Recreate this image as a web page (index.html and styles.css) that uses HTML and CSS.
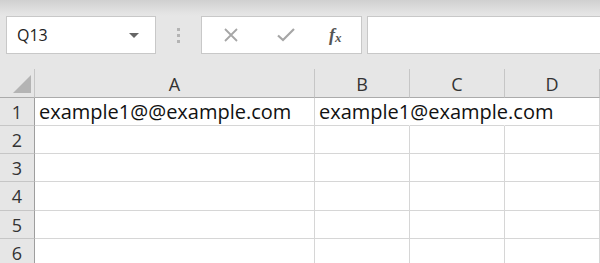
FILE: index.html
```html
<!DOCTYPE html>
<html lang="en">
<head>
  <meta charset="UTF-8">
  <title>Sheet</title>
  <link rel="stylesheet" href="styles.css">
</head>
<body>
  <div class="toolbar">
    <div class="name-box">
      <span class="name-text">Q13</span>
      <span class="name-arrow"></span>
    </div>
    <div class="grip">
      <span></span><span></span><span></span>
    </div>
    <div class="formula-buttons">
      <svg class="btn-icon" width="16" height="16" viewBox="0 0 16 16">
        <path d="M2 2 L14 14 M14 2 L2 14" stroke="#a6a6a6" stroke-width="1.8" fill="none"/>
      </svg>
      <svg class="btn-icon" width="18" height="16" viewBox="0 0 18 16">
        <path d="M1 8.5 L6 13 L17 2" stroke="#a6a6a6" stroke-width="2.2" fill="none"/>
      </svg>
      <span class="fx">f<sub>x</sub></span>
    </div>
    <div class="formula-input"></div>
  </div>

  <div class="sheet">
    <div class="row head-row">
      <div class="corner"><span class="corner-tri"></span></div>
      <div class="col-head col-a">A</div>
      <div class="col-head col-b">B</div>
      <div class="col-head col-c">C</div>
      <div class="col-head col-d">D</div>
    </div>
    <div class="row">
      <div class="row-head">1</div>
      <div class="cell col-a">example1@@example.com</div>
      <div class="cell col-b spill">example1@example.com</div>
      <div class="cell col-c spill"></div>
      <div class="cell col-d"></div>
    </div>
    <div class="row">
      <div class="row-head">2</div>
      <div class="cell col-a"></div>
      <div class="cell col-b"></div>
      <div class="cell col-c"></div>
      <div class="cell col-d"></div>
    </div>
    <div class="row">
      <div class="row-head">3</div>
      <div class="cell col-a"></div>
      <div class="cell col-b"></div>
      <div class="cell col-c"></div>
      <div class="cell col-d"></div>
    </div>
    <div class="row tall">
      <div class="row-head">4</div>
      <div class="cell col-a"></div>
      <div class="cell col-b"></div>
      <div class="cell col-c"></div>
      <div class="cell col-d"></div>
    </div>
    <div class="row">
      <div class="row-head">5</div>
      <div class="cell col-a"></div>
      <div class="cell col-b"></div>
      <div class="cell col-c"></div>
      <div class="cell col-d"></div>
    </div>
    <div class="row">
      <div class="row-head">6</div>
      <div class="cell col-a"></div>
      <div class="cell col-b"></div>
      <div class="cell col-c"></div>
      <div class="cell col-d"></div>
    </div>
  </div>
</body>
</html>
```
FILE: styles.css
```css
/* General */
body {
  margin: 0;
  background: #e6e6e6;
  font-family: 'Open Sans', 'Liberation Sans', sans-serif;
  overflow: hidden;
}

/* Formula bar */
.toolbar {
  height: 69px;
  box-sizing: border-box;
  padding-top: 16px;
  display: flex;
  align-items: flex-start;
  background: linear-gradient(#d0d0d0 0, #e2e2e2 12px, #e6e6e6 16px);
}

.name-box {
  margin-left: 6px;
  width: 150px;
  height: 38px;
  box-sizing: border-box;
  border: 1px solid #c8c8c8;
  background: #fff;
  display: flex;
  align-items: center;
  justify-content: space-between;
  padding: 0 16px 0 10px;
}

.name-text {
  font-size: 16px;
  color: #222;
}

.name-arrow {
  width: 0;
  height: 0;
  border-left: 5px solid transparent;
  border-right: 5px solid transparent;
  border-top: 5px solid #666;
}

.grip {
  width: 45px;
  height: 38px;
  display: flex;
  flex-direction: column;
  align-items: center;
  justify-content: center;
  gap: 3px;
}

.grip span {
  width: 3px;
  height: 3px;
  background: #b4b4b4;
}

.formula-buttons {
  width: 161px;
  height: 38px;
  box-sizing: border-box;
  border: 1px solid #c8c8c8;
  background: #fff;
  display: flex;
  align-items: center;
  padding-left: 21px;
}

.btn-icon {
  margin-right: 38px;
}

.btn-icon + .btn-icon {
  margin-right: 34px;
}

.fx {
  font-family: 'Liberation Serif', serif;
  font-style: italic;
  font-size: 18px;
  color: #555;
  font-weight: bold;
}

.fx sub {
  font-size: 13px;
  vertical-align: -1px;
}

.formula-input {
  margin-left: 5px;
  flex: 1;
  height: 38px;
  box-sizing: border-box;
  border: 1px solid #c8c8c8;
  border-right: none;
  background: #fff;
}

/* Sheet grid */
.sheet {
  background: #fff;
}

.row {
  display: flex;
  height: 28px;
  box-sizing: border-box;
}

.row.tall {
  height: 29px;
}

.head-row {
  height: 29px;
  background: #e6e6e6;
}

.corner {
  width: 35px;
  flex-shrink: 0;
  box-sizing: border-box;
  border-right: 1px solid #c6c6c6;
  border-bottom: 1px solid #ababab;
  position: relative;
}

.corner-tri {
  position: absolute;
  right: 3px;
  bottom: 4px;
  width: 0;
  height: 0;
  border-left: 18px solid transparent;
  border-bottom: 18px solid #b4b4b4;
}

.col-a { width: 280px; }
.col-b { width: 95px; }
.col-c { width: 95px; }
.col-d { flex: 1; }

.col-head {
  flex-shrink: 0;
  box-sizing: border-box;
  border-right: 1px solid #c6c6c6;
  border-bottom: 1px solid #ababab;
  display: flex;
  align-items: center;
  justify-content: center;
  font-size: 18px;
  color: #333;
  padding-top: 1px;
}

.row-head {
  width: 35px;
  flex-shrink: 0;
  box-sizing: border-box;
  background: #e6e6e6;
  border-right: 1px solid #9e9e9e;
  border-bottom: 1px solid #c6c6c6;
  display: flex;
  align-items: center;
  justify-content: center;
  font-size: 18px;
  color: #333;
}

.cell {
  flex-shrink: 0;
  box-sizing: border-box;
  border-right: 1px solid #d6d6d6;
  border-bottom: 1px solid #d6d6d6;
  font-size: 20px;
  color: #111;
  padding: 0 4px;
  display: flex;
  align-items: center;
  white-space: nowrap;
}

/* text spilling into the next cells hides their gridlines */
.spill {
  border-right-color: transparent;
  position: relative;
  z-index: 1;
}
```
